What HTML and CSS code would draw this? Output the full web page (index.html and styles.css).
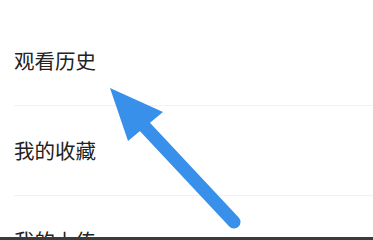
FILE: index.html
```html
<!DOCTYPE html>
<html lang="zh-CN">
<head>
    <meta charset="UTF-8">
    <meta name="viewport" content="width=device-width, initial-scale=1.0">
    <title>我的</title>
    <link rel="stylesheet" href="styles.css">
</head>
<body>
    <div class="menu-list">
        <div class="menu-item">观看历史</div>
        <div class="menu-item">我的收藏</div>
        <div class="menu-item">我的上传</div>
    </div>

    <!-- Annotation arrow -->
    <svg class="hint-arrow" width="373" height="240" viewBox="0 0 373 240">
        <line x1="145" y1="127" x2="234" y2="222" stroke="#3990ea" stroke-width="13" stroke-linecap="round"/>
        <polygon points="110,88 163,112 128,141" fill="#3990ea"/>
    </svg>

    <div class="bottom-bar"></div>
</body>
</html>
```

FILE: styles.css
```css
/* Base styles */
body {
    margin: 0;
    background: #fff;
    font-family: "Noto Sans CJK SC", "Noto Sans", sans-serif;
    overflow: hidden;
}

/* Menu list */
.menu-list {
    padding: 16px 0 0 14px;
}

.menu-item {
    height: 90px;
    display: flex;
    align-items: center;
    padding-bottom: 2px;
    box-sizing: border-box;
    border-bottom: 1px solid #f1f1f1;
    font-size: 20.5px;
    color: #222;
}

/* Overlays */
.hint-arrow {
    position: absolute;
    top: 0;
    left: 0;
}

.bottom-bar {
    position: fixed;
    left: 0;
    right: 0;
    bottom: 0;
    height: 3px;
    background: #3b3b3b;
}
```
